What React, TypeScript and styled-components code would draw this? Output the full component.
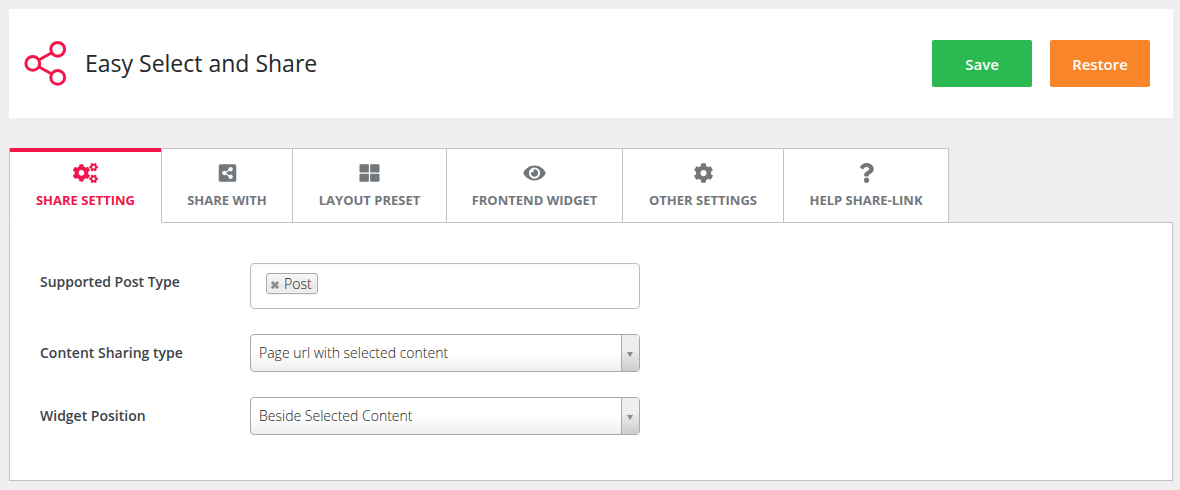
import React, { useState } from "react";
import styled, { createGlobalStyle, css } from "styled-components";
import { FaCog, FaCogs, FaEye, FaQuestion, FaShareAltSquare, FaThLarge } from "react-icons/fa";

const colors = {
  accent: "#f1164b",
  line: "#c3c3c3",
  control: "#aaaaaa",
  muted: "#72777c",
  label: "#3c434a",
  heading: "#23282d",
};

const GlobalStyle = createGlobalStyle`
  *, *::before, *::after { box-sizing: border-box; }
  body {
    margin: 0;
    background: #efefef;
    font-family: "Open Sans", "Noto Sans", sans-serif;
    font-size: 14px;
  }
`;

const Page = styled.main`
  padding: 9px 7px 9px 9px;
`;

const Header = styled.header`
  display: flex;
  align-items: flex-start;
  gap: 18px;
  padding: 31px 23px 31px 15px;
  background: #fff;
`;

const Logo = styled.svg`
  width: 43px;
  height: 46px;
  fill: none;
  stroke: ${colors.accent};
  stroke-width: 3;
`;

const Title = styled.h1`
  flex: 1;
  margin: 0;
  color: ${colors.heading};
  font-size: 23px;
  font-weight: 400;
  line-height: 46px;
`;

const ActionButton = styled.button<{ $color: string }>`
  width: 100px;
  height: 47px;
  padding: 0;
  border: 0;
  border-radius: 2px;
  background: ${(p) => p.$color};
  color: #fff;
  font: 600 15px/20px "Open Sans", "Noto Sans", sans-serif;
  cursor: pointer;
`;

const TabList = styled.div`
  position: relative;
  z-index: 1;
  display: flex;
  margin: 30px 0 -1px;
`;

const Tab = styled.button<{ $width: number; $active: boolean }>`
  display: flex;
  flex-direction: column;
  align-items: center;
  gap: 7px;
  min-width: ${(p) => p.$width}px;
  height: 75px;
  padding: 14px 0 0;
  border: 1px solid ${colors.line};
  border-left-width: 0;
  background: #fff;
  color: ${colors.muted};
  font: 700 13px/20px "Open Sans", "Noto Sans", sans-serif;
  text-transform: uppercase;
  white-space: nowrap;
  cursor: pointer;

  &:first-child {
    border-left-width: 1px;
  }

  svg {
    width: 25px;
    height: 20px;
  }

  ${(p) =>
    p.$active &&
    css`
      padding-top: 15px;
      border-top-width: 0;
      border-bottom-color: #fff;
      box-shadow: inset 0 4px ${colors.accent};
      color: ${colors.accent};
    `}
`;

const Panel = styled.section`
  display: flex;
  flex-direction: column;
  gap: 25px;
  padding: 40px 30px 45px;
  border: 1px solid ${colors.line};
  background: #fff;
`;

const Field = styled.div`
  display: flex;
  align-items: flex-start;
`;

const FieldLabel = styled.label`
  width: 210px;
  color: ${colors.label};
  font-size: 14px;
  font-weight: 600;
  line-height: 38px;
`;

const TagBox = styled.div`
  display: flex;
  align-items: flex-start;
  gap: 8px;
  width: 100%;
  max-width: 390px;
  height: 46px;
  padding: 9px 15px;
  border: 1px solid #bbb;
  border-radius: 4px;
  background: linear-gradient(to bottom, #f8f8f8 1%, #fff 15%);
`;

const Tag = styled.span`
  display: flex;
  align-items: center;
  gap: 5px;
  height: 21px;
  padding: 0 5px 0 4px;
  border: 1px solid ${colors.control};
  border-radius: 3px;
  background: linear-gradient(to bottom, #f4f4f4 20%, #f0f0f0 50%, #e8e8e8 52%, #eee 100%);
  box-shadow: inset 0 0 2px #fff, 0 1px 0 rgba(0, 0, 0, 0.05);
  color: #222;
  font-weight: 300;
  line-height: 18px;
`;

const RemoveButton = styled.button`
  display: flex;
  padding: 3px 0 0;
  border: 0;
  background: none;
  color: #8b8b8b;
  cursor: pointer;

  svg {
    width: 8px;
    height: 8px;
    stroke: currentColor;
    stroke-width: 3;
  }
`;

const TagInput = styled.input`
  flex: 1;
  min-width: 0;
  height: 21px;
  padding: 0;
  border: 0;
  outline: 0;
  background: transparent;
  font: 300 14px/20px "Open Sans", "Noto Sans", sans-serif;
`;

const SelectBox = styled.div`
  display: grid;
  width: 100%;
  max-width: 390px;
`;

const Select = styled.select`
  grid-area: 1 / 1;
  width: 100%;
  height: 38px;
  padding: 0 26px 0 8px;
  border: 1px solid ${colors.control};
  border-radius: 4px;
  appearance: none;
  background: linear-gradient(to top, #eee 0%, #fff 50%);
  color: #222;
  font: 300 14px/20px "Open Sans", "Noto Sans", sans-serif;
`;

const SelectArrow = styled.span`
  grid-area: 1 / 1;
  justify-self: end;
  display: flex;
  align-items: center;
  justify-content: center;
  width: 18px;
  margin: 1px;
  padding-right: 1px;
  border-left: 1px solid ${colors.control};
  border-radius: 0 3px 3px 0;
  background: linear-gradient(to top, #ccc 0%, #eee 60%);
  pointer-events: none;

  &::after {
    content: "";
    margin-top: 2px;
    border: 3px solid transparent;
    border-top: 5px solid #888;
    border-bottom: 0;
  }
`;

const tabs = [
  { label: "Share Setting", Icon: FaCogs, width: 153 },
  { label: "Share With", Icon: FaShareAltSquare, width: 131 },
  { label: "Layout Preset", Icon: FaThLarge, width: 154 },
  { label: "Frontend Widget", Icon: FaEye, width: 176 },
  { label: "Other Settings", Icon: FaCog, width: 161 },
  { label: "Help Share-Link", Icon: FaQuestion, width: 165 },
];

function Dropdown({ id, options }: { id: string; options: string[] }) {
  return (
    <SelectBox>
      <Select id={id}>
        {options.map((option) => (
          <option key={option}>{option}</option>
        ))}
      </Select>
      <SelectArrow aria-hidden="true" />
    </SelectBox>
  );
}

export default function App() {
  const [active, setActive] = useState(0);
  const [tags, setTags] = useState(["Post"]);

  return (
    <>
      <GlobalStyle />
      <Page>
        <Header>
          <Logo viewBox="0 0 43 46" aria-hidden="true">
            <circle cx="33.7" cy="9.3" r="6.9" />
            <circle cx="8.8" cy="23.4" r="6.9" />
            <circle cx="33.7" cy="37.4" r="6.9" />
            <path d="M14.8 20 27.7 12.7M14.8 26.8 27.7 34" />
          </Logo>
          <Title>Easy Select and Share</Title>
          <ActionButton type="button" $color="#2bb951">Save</ActionButton>
          <ActionButton type="button" $color="#f8852a">Restore</ActionButton>
        </Header>

        <TabList role="tablist">
          {tabs.map(({ label, Icon, width }, index) => (
            <Tab
              key={label}
              type="button"
              role="tab"
              aria-selected={index === active}
              $width={width}
              $active={index === active}
              onClick={() => setActive(index)}
            >
              <Icon aria-hidden="true" />
              {label}
            </Tab>
          ))}
        </TabList>

        <Panel role="tabpanel">
          <Field>
            <FieldLabel htmlFor="post-type">Supported Post Type</FieldLabel>
            <TagBox>
              {tags.map((tag) => (
                <Tag key={tag}>
                  <RemoveButton
                    type="button"
                    aria-label={`Remove ${tag}`}
                    onClick={() => setTags(tags.filter((item) => item !== tag))}
                  >
                    <svg viewBox="0 0 9 9" aria-hidden="true">
                      <path d="M1 1 8 8M8 1 1 8" />
                    </svg>
                  </RemoveButton>
                  {tag}
                </Tag>
              ))}
              <TagInput id="post-type" type="text" />
            </TagBox>
          </Field>
          <Field>
            <FieldLabel htmlFor="sharing-type">Content Sharing type</FieldLabel>
            <Dropdown id="sharing-type" options={["Page url with selected content"]} />
          </Field>
          <Field>
            <FieldLabel htmlFor="widget-position">Widget Position</FieldLabel>
            <Dropdown id="widget-position" options={["Beside Selected Content"]} />
          </Field>
        </Panel>
      </Page>
    </>
  );
}
